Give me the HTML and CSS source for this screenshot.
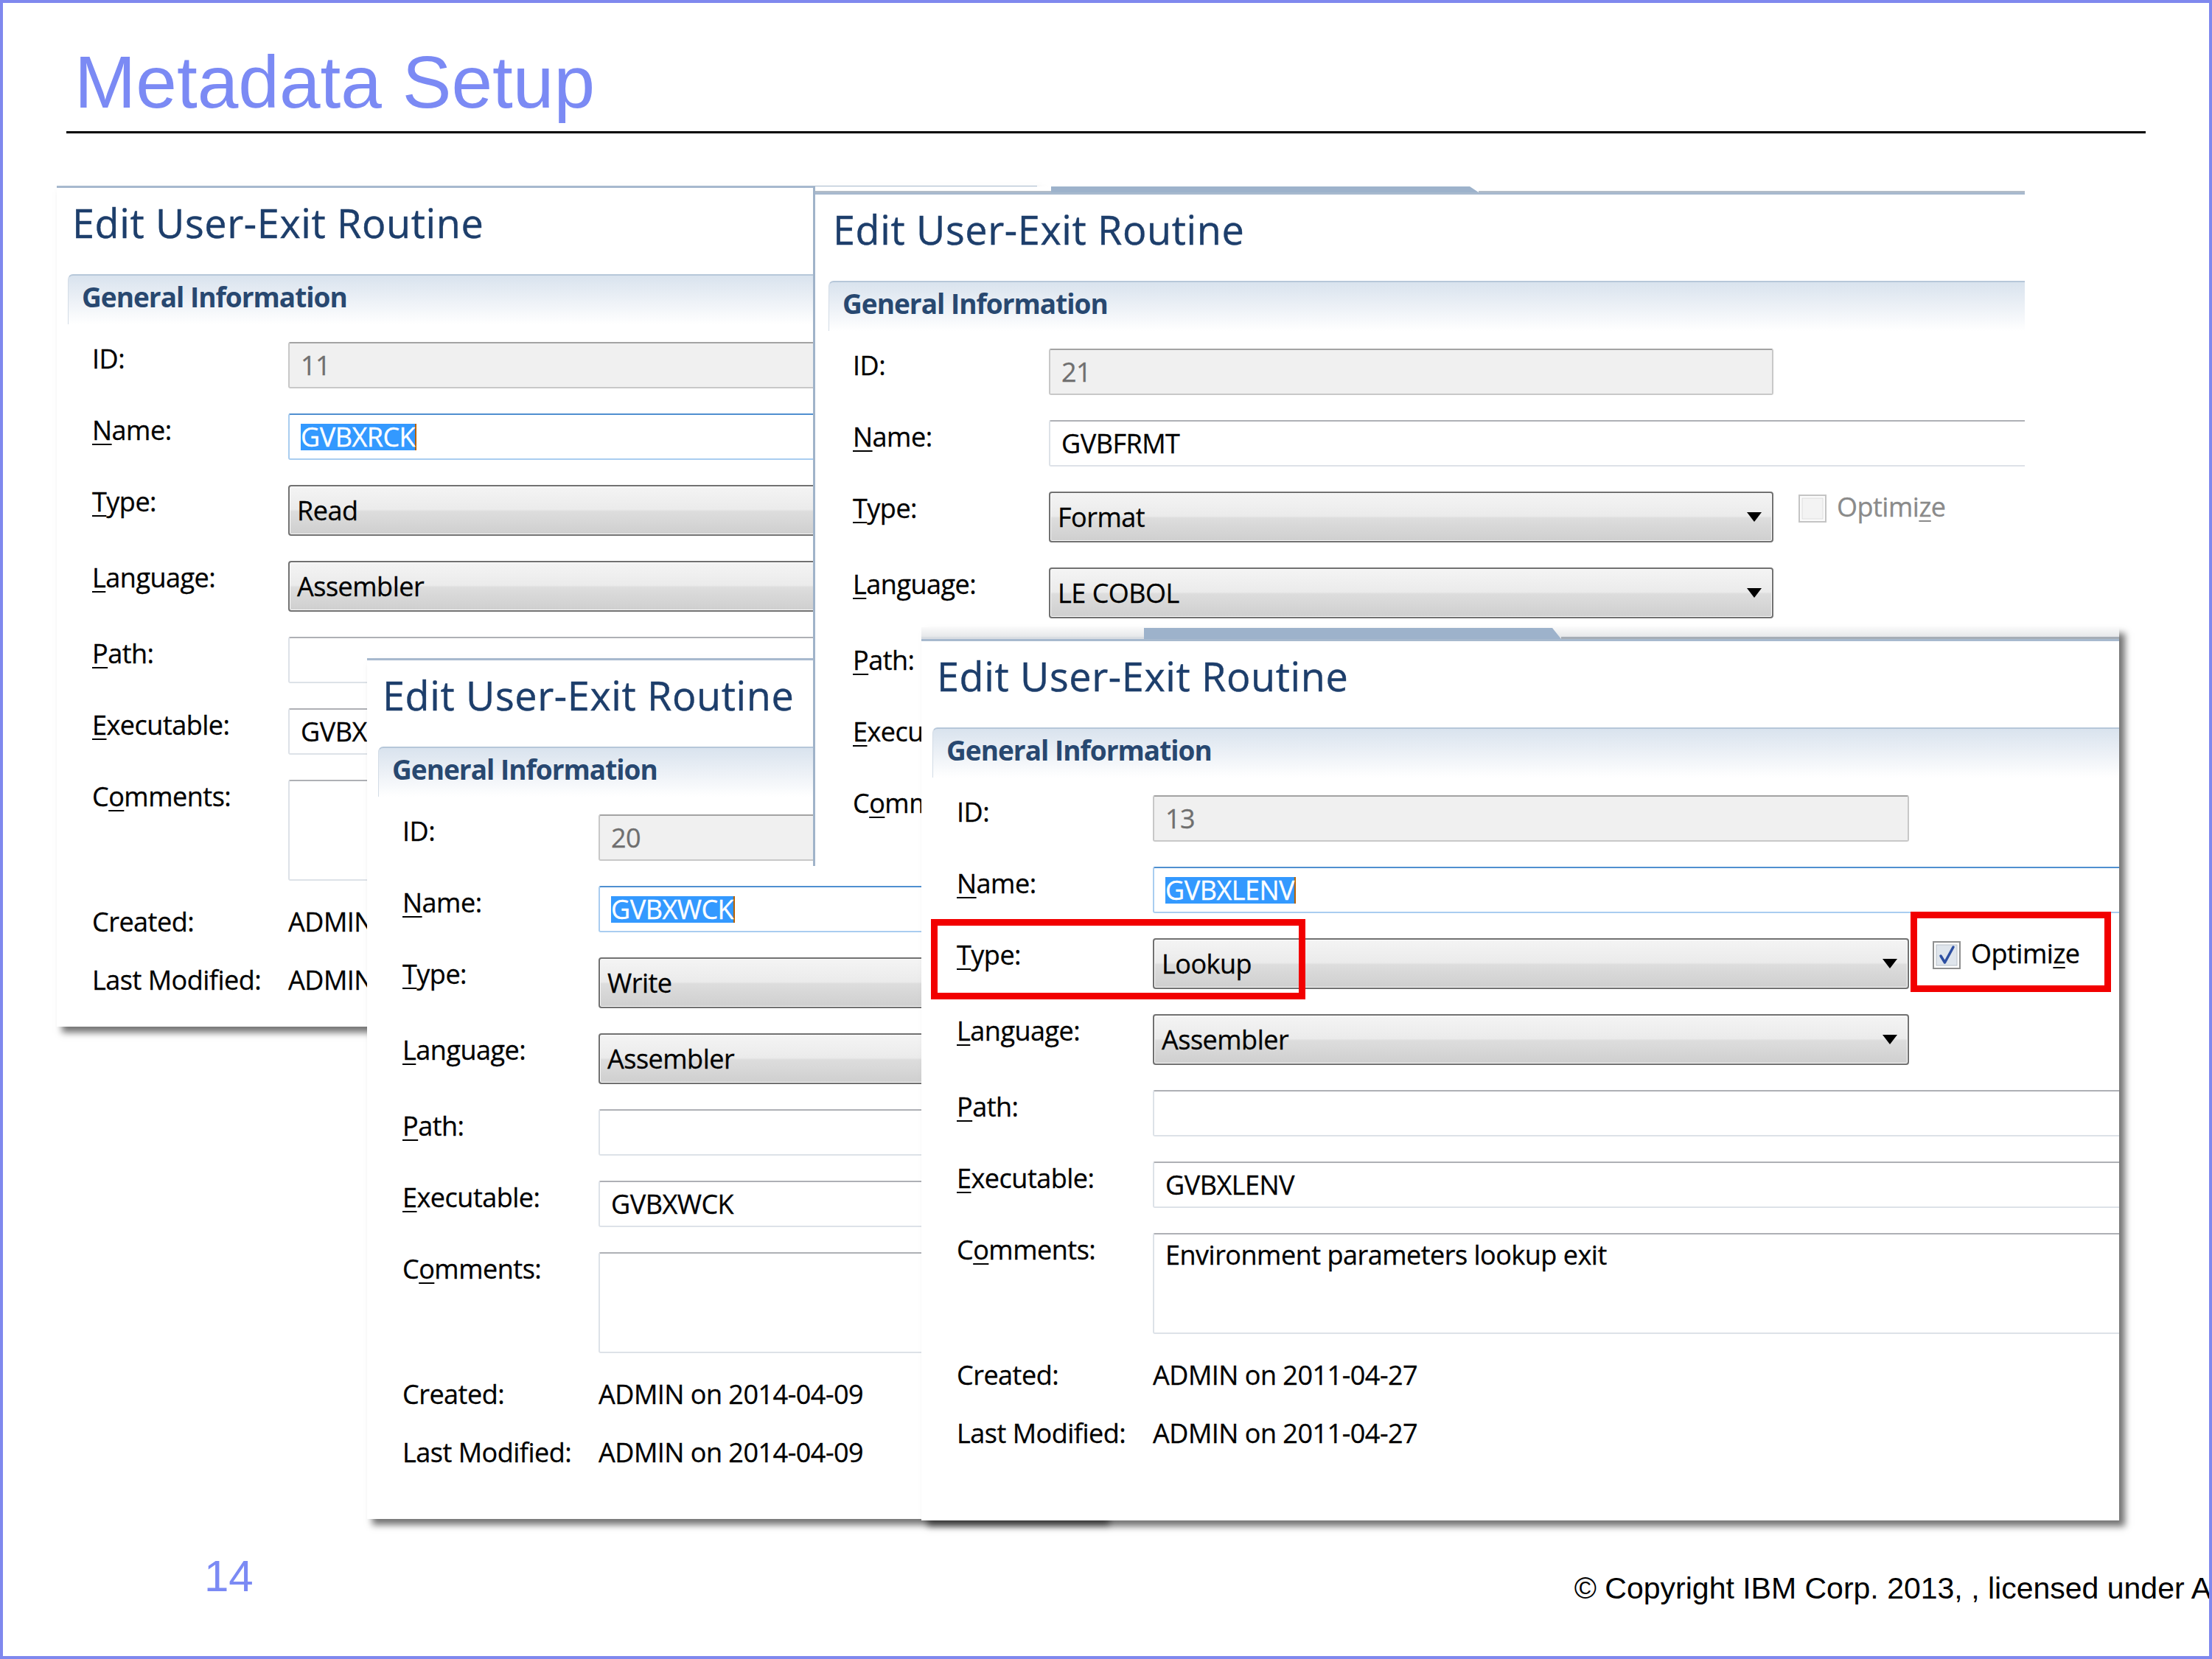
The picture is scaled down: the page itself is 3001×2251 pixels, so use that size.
FILE: index.html
```html
<!DOCTYPE html>
<html lang="en">
<head>
<meta charset="utf-8">
<title>Metadata Setup</title>
<link rel="stylesheet" href="styles.css">
</head>
<body>
<div class="slide">
  <header class="slide-head">
    <h1 class="slide-title">Metadata Setup</h1>
    <div class="rule"></div>
  </header>

  <main class="stage">
    <!-- Dialog A (back, left) -->
    <section class="dlg dlg-a">
      <div class="topline"></div>
      <div class="dlg-body">
        <h2 class="dlg-title">Edit User-Exit Routine</h2>
        <div class="sec-head">General Information</div>
        <div class="form">
          <div class="row"><span class="lbl">ID:</span><div class="fld fld-ro fixed"><span>11</span></div></div>
          <div class="row"><span class="lbl"><u>N</u>ame:</span><div class="fld fld-focus wide"><span class="sel">GVBXRCK</span></div></div>
          <div class="row"><span class="lbl"><u>T</u>ype:</span><div class="combo fixed"><span>Read</span><svg class="arrow" viewBox="0 0 20 13" width="20" height="13"><path d="M0 0H20L10 13Z"/></svg></div></div>
          <div class="row"><span class="lbl"><u>L</u>anguage:</span><div class="combo fixed"><span>Assembler</span><svg class="arrow" viewBox="0 0 20 13" width="20" height="13"><path d="M0 0H20L10 13Z"/></svg></div></div>
          <div class="row"><span class="lbl"><u>P</u>ath:</span><div class="fld wide"></div></div>
          <div class="row"><span class="lbl"><u>E</u>xecutable:</span><div class="fld wide"><span>GVBXRCK</span></div></div>
          <div class="row row-comm"><span class="lbl">C<u>o</u>mments:</span><div class="fld comm wide"></div></div>
          <div class="meta"><span class="lbl">Created:</span><span class="val">ADMIN on 2014-04-09</span></div>
          <div class="meta"><span class="lbl">Last Modified:</span><span class="val">ADMIN on 2014-04-09</span></div>
        </div>
      </div>
    </section>

    <!-- Dialog C (middle, bottom-left) -->
    <section class="dlg dlg-c">
      <div class="topline"></div>
      <div class="dlg-body">
        <h2 class="dlg-title">Edit User-Exit Routine</h2>
        <div class="sec-head">General Information</div>
        <div class="form">
          <div class="row"><span class="lbl">ID:</span><div class="fld fld-ro fixed"><span>20</span></div></div>
          <div class="row"><span class="lbl"><u>N</u>ame:</span><div class="fld fld-focus wide"><span class="sel">GVBXWCK</span></div></div>
          <div class="row"><span class="lbl"><u>T</u>ype:</span><div class="combo fixed"><span>Write</span><svg class="arrow" viewBox="0 0 20 13" width="20" height="13"><path d="M0 0H20L10 13Z"/></svg></div></div>
          <div class="row"><span class="lbl"><u>L</u>anguage:</span><div class="combo fixed"><span>Assembler</span><svg class="arrow" viewBox="0 0 20 13" width="20" height="13"><path d="M0 0H20L10 13Z"/></svg></div></div>
          <div class="row"><span class="lbl"><u>P</u>ath:</span><div class="fld wide"></div></div>
          <div class="row"><span class="lbl"><u>E</u>xecutable:</span><div class="fld wide"><span>GVBXWCK</span></div></div>
          <div class="row row-comm"><span class="lbl">C<u>o</u>mments:</span><div class="fld comm wide"></div></div>
          <div class="meta"><span class="lbl">Created:</span><span class="val">ADMIN on 2014-04-09</span></div>
          <div class="meta"><span class="lbl">Last Modified:</span><span class="val">ADMIN on 2014-04-09</span></div>
        </div>
      </div>
    </section>

    <!-- Dialog B (top, right) -->
    <section class="dlg dlg-b">
      <div class="band"><span class="seg seg-l"></span><span class="tab"></span><span class="seg"></span></div>
      <div class="topline"></div>
      <div class="dlg-body">
        <h2 class="dlg-title">Edit User-Exit Routine</h2>
        <div class="sec-head">General Information</div>
        <div class="form">
          <div class="row"><span class="lbl">ID:</span><div class="fld fld-ro fixed"><span>21</span></div></div>
          <div class="row"><span class="lbl"><u>N</u>ame:</span><div class="fld wide"><span>GVBFRMT</span></div></div>
          <div class="row"><span class="lbl"><u>T</u>ype:</span><div class="combo fixed"><span>Format</span><svg class="arrow" viewBox="0 0 20 13" width="20" height="13"><path d="M0 0H20L10 13Z"/></svg></div>
            <span class="chk chk-off"><svg class="cb" viewBox="0 0 38 38" width="38" height="38"><rect x="1" y="1" width="36" height="36" fill="#fbfbfb" stroke="#c4c4c4" stroke-width="2"/><rect x="5" y="5" width="28" height="28" fill="#f3f3f3" stroke="#dedede" stroke-width="1"/></svg>Optimi<u>z</u>e</span></div>
          <div class="row"><span class="lbl"><u>L</u>anguage:</span><div class="combo fixed"><span>LE COBOL</span><svg class="arrow" viewBox="0 0 20 13" width="20" height="13"><path d="M0 0H20L10 13Z"/></svg></div></div>
          <div class="row"><span class="lbl"><u>P</u>ath:</span><div class="fld wide"></div></div>
          <div class="row"><span class="lbl"><u>E</u>xecutable:</span><div class="fld wide"><span>GVBFRMT</span></div></div>
          <div class="row row-comm"><span class="lbl">C<u>o</u>mments:</span><div class="fld comm wide"></div></div>
        </div>
      </div>
    </section>

    <!-- Dialog D (front) -->
    <section class="dlg dlg-d">
      <div class="band"><span class="seg seg-l"></span><span class="tab"></span><span class="seg"></span></div>
      <div class="topline"></div>
      <div class="dlg-body">
        <h2 class="dlg-title">Edit User-Exit Routine</h2>
        <div class="sec-head">General Information</div>
        <div class="form">
          <div class="row"><span class="lbl">ID:</span><div class="fld fld-ro fixed"><span>13</span></div></div>
          <div class="row"><span class="lbl"><u>N</u>ame:</span><div class="fld fld-focus wide"><span class="sel">GVBXLENV</span></div></div>
          <div class="row"><span class="lbl"><u>T</u>ype:</span><div class="combo fixed"><span>Lookup</span><svg class="arrow" viewBox="0 0 20 13" width="20" height="13"><path d="M0 0H20L10 13Z"/></svg></div>
            <span class="chk"><svg class="cb" viewBox="0 0 38 38" width="38" height="38"><rect x="1" y="1" width="36" height="36" fill="#ffffff" stroke="#8e8f8f" stroke-width="2"/><rect x="5" y="5" width="28" height="28" fill="#dfe5ec" stroke="#b9c0c8" stroke-width="1"/><path d="M11 20 L16.5 29 L28 8" fill="none" stroke="#2d4fa1" stroke-width="3.5" stroke-linejoin="round" stroke-linecap="round"/></svg>Optimi<u>z</u>e</span></div>
          <div class="row"><span class="lbl"><u>L</u>anguage:</span><div class="combo fixed"><span>Assembler</span><svg class="arrow" viewBox="0 0 20 13" width="20" height="13"><path d="M0 0H20L10 13Z"/></svg></div></div>
          <div class="row"><span class="lbl"><u>P</u>ath:</span><div class="fld wide"></div></div>
          <div class="row"><span class="lbl"><u>E</u>xecutable:</span><div class="fld wide"><span>GVBXLENV</span></div></div>
          <div class="row row-comm"><span class="lbl">C<u>o</u>mments:</span><div class="fld comm wide"><span>Environment parameters lookup exit</span></div></div>
          <div class="meta"><span class="lbl">Created:</span><span class="val">ADMIN on 2011-04-27</span></div>
          <div class="meta"><span class="lbl">Last Modified:</span><span class="val">ADMIN on 2011-04-27</span></div>
        </div>
      </div>
    </section>

    <div class="mark mark-type"></div>
    <div class="mark mark-opt"></div>
  </main>

  <footer class="slide-foot">
    <span class="page-num">14</span>
    <span class="copy">© Copyright IBM Corp. 2013, , licensed under Apache License 2.0</span>
  </footer>
</div>
</body>
</html>
```
FILE: styles.css
```css
html, body {
  margin: 0;
  padding: 0;
  background: #ffffff;
}

.slide {
  position: relative;
  width: 3001px;
  height: 2251px;
  box-sizing: border-box;
  border: 4px solid #7f88ee;
  overflow: hidden;
  background: #ffffff;
  font-family: "Liberation Sans", Arial, sans-serif;
}

/* ---------- slide header ---------- */
.slide-head {
  padding-top: 57px;
}

.slide-title {
  margin: 0 0 0 97px;
  font-family: "Liberation Sans", Arial, sans-serif;
  font-weight: 400;
  font-size: 100px;
  line-height: 100px;
  color: #7b8af4;
}

.rule {
  margin: 17px 0 0 86px;
  width: 2821px;
  height: 3px;
  background: #000000;
}

/* ---------- stage with overlapping dialogs ---------- */
.stage {
  position: relative;
  height: 1900px;
}

.dlg {
  position: absolute;
  box-sizing: border-box;
  background: #ffffff;
  overflow: hidden;
  font-family: "Open Sans", "Segoe UI", "DejaVu Sans", sans-serif;
  color: #000000;
}

.dlg-a {
  left: 73px;
  top: 71px;
  width: 1330px;
  height: 1141px;
  z-index: 1;
  box-shadow: 7px 8px 9px rgba(0, 0, 0, 0.55);
}

.dlg-c {
  left: 494px;
  top: 712px;
  width: 1000px;
  height: 1168px;
  z-index: 2;
  box-shadow: 7px 8px 9px rgba(0, 0, 0, 0.55);
}

.dlg-b {
  left: 1099px;
  top: 72px;
  width: 1644px;
  height: 922px;
  z-index: 3;
  border-left: 3px solid #a0b3c9;
  --cw: 983px;
}

.dlg-d {
  left: 1246px;
  top: 670px;
  width: 1625px;
  height: 1212px;
  z-index: 4;
  box-shadow: 8px 8px 9px rgba(0, 0, 0, 0.55);
  --cw: 1026px;
}

/* top edge of each window */
.topline {
  height: 3px;
  background: #a7b9ce;
}

.band {
  display: flex;
  align-items: flex-end;
  height: 8px;
}

.band .seg {
  flex: 1 1 auto;
  height: 2px;
  background: #b2bcc7;
}

.band .seg-l {
  flex: 0 0 auto;
}

.band .tab {
  flex: 0 0 auto;
  height: 8px;
  background: #9db2cb;
  clip-path: polygon(0 0, calc(100% - 12px) 0, 100% 100%, 0 100%);
}

.dlg-b .seg-l { width: 320px; }
.dlg-b .tab { width: 580px; }

.dlg-d .band {
  height: 16px;
  background: linear-gradient(#fafafa, #e1e3e6);
}
.dlg-d .tab { height: 15px; }
.dlg-d .seg { height: 3px; background: #a6adb6; }
.dlg-d .seg-l { width: 302px; background: #d9dde2; }
.dlg-d .tab { width: 566px; }

.dlg-body {
  padding-top: 20px;
}

.dlg-b .dlg-body {
  padding-left: 3px;
}

.dlg-title {
  margin: 0 0 0 21px;
  font-weight: 400;
  font-size: 54px;
  line-height: 54px;
  letter-spacing: 0.6px;
  color: #1d3e6b;
  white-space: nowrap;
  -webkit-text-stroke: 0.4px #1d3e6b;
}

.sec-head {
  margin: 43px -20px 0 15px;
  height: 68px;
  box-sizing: border-box;
  padding-left: 18px;
  border-top: 2px solid #b6c7d9;
  border-left: 1px solid #d3dce6;
  border-top-left-radius: 7px;
  background: linear-gradient(#d9e3ee, #eef2f7 55%, #ffffff);
  font-weight: 700;
  font-size: 37px;
  line-height: 58px;
  letter-spacing: -1px;
  color: #284870;
  white-space: nowrap;
}

/* ---------- form rows ---------- */
.form {
  margin-top: 24px;
  padding-left: 48px;
  font-size: 36px;
  letter-spacing: -0.5px;
  -webkit-text-stroke: 0.3px currentColor;
}

.row {
  display: flex;
  align-items: flex-start;
  margin-bottom: 34px;
}

.row-comm {
  margin-bottom: 38px;
}

.lbl {
  flex: 0 0 266px;
  line-height: 36px;
  margin-top: 5px;
  white-space: nowrap;
}

.lbl u,
.chk u {
  text-decoration-thickness: 2px;
  text-underline-offset: 5px;
}

.fld {
  box-sizing: border-box;
  height: 63px;
  display: flex;
  align-items: center;
  padding-left: 15px;
  border: 2px solid #dde2e8;
  border-top-color: #aeb0b5;
  border-radius: 3px;
  background: #ffffff;
  line-height: 36px;
  white-space: nowrap;
  overflow: hidden;
}

.fixed {
  flex: 0 0 var(--cw, 1000px);
}

.wide {
  flex: 1 0 auto;
  margin-right: -40px;
}

.fld-ro {
  background: #f0f0f0;
  border-color: #c8c8c8;
  border-top-color: #a3a3a3;
  color: #6f6f6f;
}

.fld-focus {
  border-color: #a9cdf0;
  border-top-color: #4f8fd0;
}

.sel {
  background: #3399ff;
  color: #ffffff;
  box-shadow: 2px 0 0 #b86000;
}

.comm {
  height: 137px;
  align-items: flex-start;
  padding-top: 10px;
}

.combo {
  box-sizing: border-box;
  height: 69px;
  display: flex;
  align-items: center;
  justify-content: space-between;
  padding: 0 14px 0 10px;
  border: 2px solid #717171;
  border-radius: 4px;
  background: linear-gradient(#f4f4f4, #ebebeb 48%, #dddddd 52%, #cfcfcf);
  box-shadow: inset 0 0 0 1px #fbfbfb;
  line-height: 36px;
  white-space: nowrap;
}

.arrow {
  flex: none;
  fill: #000000;
}

.chk {
  display: flex;
  align-items: flex-start;
  margin-left: 32px;
  line-height: 36px;
  margin-top: 3px;
  white-space: nowrap;
}

.dlg-b .chk {
  margin-left: 34px;
}

.chk-off {
  color: #8a8a8a;
}

.cb {
  flex: none;
  margin: 1px 14px 0 0;
}

.meta {
  display: flex;
}

.meta .lbl {
  margin-top: 0;
}

.meta + .meta {
  margin-top: 43px;
}

.val {
  line-height: 36px;
  white-space: nowrap;
}

/* ---------- red callouts ---------- */
.mark {
  position: absolute;
  box-sizing: border-box;
  border: 9px solid #f20000;
  z-index: 5;
}

.mark-type {
  left: 1259px;
  top: 1066px;
  width: 508px;
  height: 109px;
}

.mark-opt {
  left: 2588px;
  top: 1056px;
  width: 272px;
  height: 109px;
}

/* ---------- footer ---------- */
.slide-foot {
  display: flex;
  align-items: flex-start;
  padding-left: 273px;
}

.page-num {
  flex: none;
  margin-top: 28px;
  font-family: "Liberation Sans", Arial, sans-serif;
  font-size: 60px;
  line-height: 60px;
  color: #7b8af4;
}

.copy {
  flex: none;
  margin: 54px 0 0 1792px;
  font-family: "Liberation Sans", Arial, sans-serif;
  font-size: 41px;
  line-height: 41px;
  color: #000000;
  white-space: nowrap;
}
```
